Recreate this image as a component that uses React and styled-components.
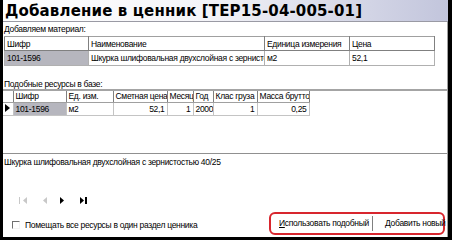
import React from 'react';
import styled, { createGlobalStyle } from 'styled-components';

const GlobalStyle = createGlobalStyle`
  html, body {
    margin: 0;
    padding: 0;
    background: #ffffff;
  }
  * {
    box-sizing: border-box;
  }
`;

const Window = styled.div`
  width: 452px;
  height: 240px;
  display: flex;
  flex-direction: column;
  background: #ffffff;
  border-left: 3px solid #000000;
  border-right: 4px solid #000000;
  border-bottom: 3px solid #000000;
  font-family: "Liberation Sans", Arial, sans-serif;
  font-size: 8.5px;
  letter-spacing: -0.3px;
  color: #000000;
  overflow: hidden;
`;

const TitleBar = styled.div`
  height: 22px;
  flex: none;
  display: flex;
  align-items: center;
  padding: 1px 0 0 2px;
  background: linear-gradient(to right, #ffffff 0%, #f4f4f8 45%, #c2c5dc 100%);
  border-bottom: 1px solid #9a9aa4;
  font-family: "DejaVu Sans", Verdana, sans-serif;
  font-size: 15px;
  font-weight: bold;
  letter-spacing: 0.15px;
`;

const Body = styled.div`
  flex: 1;
  display: flex;
  flex-direction: column;
  border-right: 1px solid #a0a0a0;
  min-height: 0;
`;

const Caption = styled.div`
  height: ${p => p.$height || 14}px;
  line-height: ${p => p.$height || 14}px;
  padding-left: 1px;
  margin-top: ${p => p.$gap || 0}px;
`;

const Table = styled.table`
  border-collapse: collapse;
  table-layout: fixed;
  margin-left: ${p => (p.$inset ? 1 : 0)}px;
  width: ${p => p.$width}px;
  & td {
    padding: 0 2px;
    white-space: nowrap;
    overflow: hidden;
  }
`;

const HeadCell = styled.td`
  height: 14px;
  border: 1px solid #808080;
  border-top-color: #a0a0a0;
  background: #ffffff;
`;

const DataCell = styled.td`
  height: 15px;
  border: 1px solid #b0b0b0;
  border-top: none;
  background: ${p => (p.$selected ? '#b6b6be' : '#ffffff')};
  text-align: ${p => (p.$right ? 'right' : 'left')};
`;

const GridArea = styled.div`
  height: 65px;
  border-top: 2px solid #a4a4a4;
  border-bottom: 1px solid #909090;
`;

const GridHeadCell = styled.td`
  height: 11px;
  border-right: 1px solid #808080;
  border-bottom: 1px solid #a0a0a0;
  background: #ffffff;
`;

const GridCell = styled.td`
  height: 13px;
  border-right: 1px solid #c4c4c4;
  border-bottom: 1px solid #c4c4c4;
  background: ${p => (p.$selected ? '#b6b6be' : '#ffffff')};
  text-align: ${p => (p.$right ? 'right' : 'left')};
`;

const Memo = styled.div`
  height: 39px;
  padding: 3px 0 0 1px;
`;

const Navigator = styled.div`
  display: flex;
  align-items: center;
  gap: 6px;
  height: 14px;
  padding-left: 13px;
`;

const NavButton = styled.span`
  width: 14px;
  display: flex;
  justify-content: center;
  color: ${p => (p.$disabled ? '#c8c8c8' : '#000000')};
`;

const Footer = styled.div`
  flex: 1;
  display: flex;
  align-items: center;
  justify-content: space-between;
  padding: 2px 2px 0 9px;
`;

const CheckRow = styled.label`
  display: flex;
  align-items: center;
  gap: 5px;
  margin-top: 3px;
`;

const CheckBox = styled.span`
  width: 8px;
  height: 8px;
  border-top: 1px solid #707070;
  border-left: 1px solid #707070;
  border-right: 1px solid #f4f4f4;
  border-bottom: 1px solid #f4f4f4;
`;

const ButtonGroup = styled.div`
  display: flex;
  align-items: center;
  height: 23px;
  width: 176px;
  border: 2px solid #d8262e;
  border-radius: 6px;
  padding: 0 0 0 8px;
`;

const ActionButton = styled.span`
  padding: ${p => (p.$last ? '0 0 0 12px' : '0 3px 0 0')};
  height: 15px;
  line-height: 15px;
  white-space: nowrap;
  border-right: ${p => (p.$last ? 'none' : '1px solid #808080')};
`;

const ArrowIcon = ({ bar, left }) => (
  <svg width="9" height="7" viewBox="0 0 9 7">
    {left ? (
      <>
        {bar && <rect x="0" y="0" width="1" height="7" fill="currentColor" />}
        <polygon points="8,0 8,7 4,3.5" fill="currentColor" />
      </>
    ) : (
      <>
        <polygon points="1,0 1,7 5,3.5" fill="currentColor" />
        {bar && <rect x="6" y="0" width="2" height="7" fill="currentColor" />}
      </>
    )}
  </svg>
);

const materialColumns = [
  { title: 'Шифр', width: 84 },
  { title: 'Наименование', width: 176 },
  { title: 'Единица измерения', width: 85 },
  { title: 'Цена', width: 85 },
];

const materialRow = ['101-1596', 'Шкурка шлифовальная двухслойная с зернистостью 40/25', 'м2', '52,1'];

const gridColumns = [
  { title: '', width: 10 },
  { title: 'Шифр', width: 53 },
  { title: 'Ед. изм.', width: 47 },
  { title: 'Сметная цена', width: 54 },
  { title: 'Месяц', width: 26 },
  { title: 'Год', width: 20 },
  { title: 'Клас груза', width: 44 },
  { title: 'Масса брутто', width: 52 },
];

const gridRow = [
  { value: '101-1596', selected: true },
  { value: 'м2' },
  { value: '52,1', right: true },
  { value: '1', right: true },
  { value: '2000', right: true },
  { value: '1', right: true },
  { value: '0,25', right: true },
];

const App = () => {
  const materialWidth = materialColumns.reduce((s, c) => s + c.width, 0);
  const gridWidth = gridColumns.reduce((s, c) => s + c.width, 0);

  return (
    <>
      <GlobalStyle />
      <Window>
        <TitleBar>Добавление в ценник [ТЕР15-04-005-01]</TitleBar>
        <Body>
          <Caption>Добавляем материал:</Caption>
          <Table $width={materialWidth} $inset>
            <colgroup>
              {materialColumns.map((c, i) => (
                <col key={i} style={{ width: c.width }} />
              ))}
            </colgroup>
            <tbody>
              <tr>
                {materialColumns.map((c, i) => (
                  <HeadCell key={i}>{c.title}</HeadCell>
                ))}
              </tr>
              <tr>
                {materialRow.map((v, i) => (
                  <DataCell key={i} $selected={i === 0}>{v}</DataCell>
                ))}
              </tr>
            </tbody>
          </Table>

          <Caption $gap={14} $height={9}>Подобные ресурсы в базе:</Caption>
          <GridArea>
            <Table $width={gridWidth}>
              <colgroup>
                {gridColumns.map((c, i) => (
                  <col key={i} style={{ width: c.width }} />
                ))}
              </colgroup>
              <tbody>
                <tr>
                  {gridColumns.map((c, i) => (
                    <GridHeadCell key={i}>{c.title}</GridHeadCell>
                  ))}
                </tr>
                <tr>
                  <GridCell>
                    <svg width="5" height="8" viewBox="0 0 5 8">
                      <polygon points="0,0 5,4 0,8" fill="#000" />
                    </svg>
                  </GridCell>
                  {gridRow.map((c, i) => (
                    <GridCell key={i} $selected={c.selected} $right={c.right}>
                      {c.value}
                    </GridCell>
                  ))}
                </tr>
              </tbody>
            </Table>
          </GridArea>

          <Memo>Шкурка шлифовальная двухслойная с зернистостью 40/25</Memo>

          <Navigator>
            <NavButton $disabled><ArrowIcon left bar /></NavButton>
            <NavButton $disabled><ArrowIcon left /></NavButton>
            <NavButton><ArrowIcon /></NavButton>
            <NavButton><ArrowIcon bar /></NavButton>
          </Navigator>

          <Footer>
            <CheckRow>
              <CheckBox />
              Помещать все ресурсы в один раздел ценника
            </CheckRow>
            <ButtonGroup>
              <ActionButton>
                <u>И</u>спользовать подобный
              </ActionButton>
              <ActionButton $last>
                <u>Д</u>обавить новый
              </ActionButton>
            </ButtonGroup>
          </Footer>
        </Body>
      </Window>
    </>
  );
};

export default App;
